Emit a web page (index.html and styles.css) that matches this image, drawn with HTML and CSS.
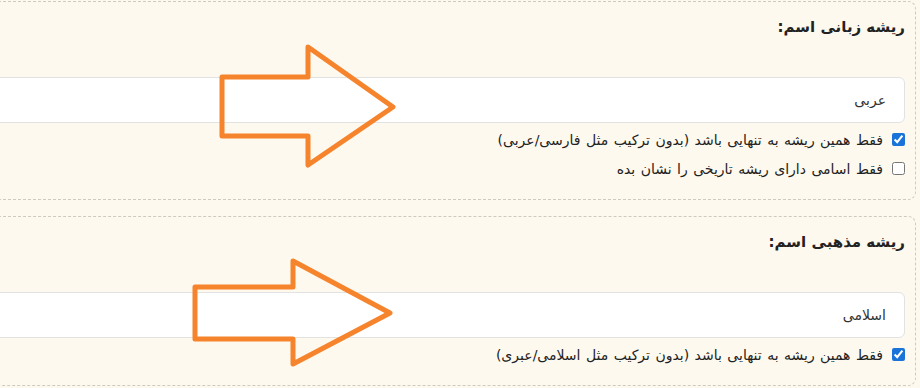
FILE: index.html
```
<!DOCTYPE html>
<html lang="fa" dir="rtl">
<head>
<meta charset="UTF-8">
<meta name="viewport" content="width=device-width, initial-scale=1.0">
<title>ریشه اسم</title>
<link rel="stylesheet" href="styles.css">
</head>
<body>
<div class="page">
    <div class="card">
        <h3 class="card-title">ریشه زبانی اسم:</h3>
        <input type="text" class="input-field" value="عربی">
        <label class="check-row"><input type="checkbox" checked> فقط همین ریشه به تنهایی باشد (بدون ترکیب مثل فارسی/عربی)</label>
        <label class="check-row"><input type="checkbox"> فقط اسامی دارای ریشه تاریخی را نشان بده</label>
    </div>
    <div class="card">
        <h3 class="card-title">ریشه مذهبی اسم:</h3>
        <input type="text" class="input-field" value="اسلامی">
        <label class="check-row"><input type="checkbox" checked> فقط همین ریشه به تنهایی باشد (بدون ترکیب مثل اسلامی/عبری)</label>
    </div>
</div>

<svg class="arrows" width="920" height="388" viewBox="0 0 920 388">
    <polygon points="222,77 308,77 308,47 393,107 308,165 308,136 222,136" />
    <polygon points="195,287 293,287 293,261 390,313 293,364 293,339 195,339" />
</svg>
</body>
</html>
```

FILE: styles.css
```
body {
    margin: 0;
    background-color: #fef9ef;
    font-family: "DejaVu Sans", sans-serif;
    color: #222;
    overflow: hidden;
}
.page {
    padding: 1px 4px 0 0;
    margin-left: -20px;
}
.card {
    border: 1px dashed #cfcac0;
    border-radius: 8px;
    padding: 12px 10px 16px 10px;
    margin-bottom: 16px;
    display: flex;
    flex-direction: column;
}
.card-title {
    margin: 0;
    font-size: 15px;
    line-height: 26px;
    font-weight: bold;
    color: #222;
}
.input-field {
    margin-top: 37px;
    height: 46px;
    box-sizing: border-box;
    border: 1px solid #e2e2e2;
    border-radius: 6px;
    background-color: #fff;
    padding: 0 18px 0 10px;
    font-family: inherit;
    font-size: 14px;
    color: #333;
    outline: none;
    direction: rtl;
}
.check-row {
    display: flex;
    align-items: center;
    gap: 9px;
    height: 29px;
    font-size: 14px;
    word-spacing: 1px;
    color: #222;
}
.check-row:first-of-type {
    margin-top: 2px;
}
.check-row input {
    margin: 0;
    width: 13px;
    height: 13px;
    accent-color: #1a73d9;
}
.arrows {
    position: absolute;
    top: 0;
    left: 0;
    pointer-events: none;
}
.arrows polygon {
    fill: none;
    stroke: #f5842c;
    stroke-width: 5;
    stroke-linejoin: round;
}
```
